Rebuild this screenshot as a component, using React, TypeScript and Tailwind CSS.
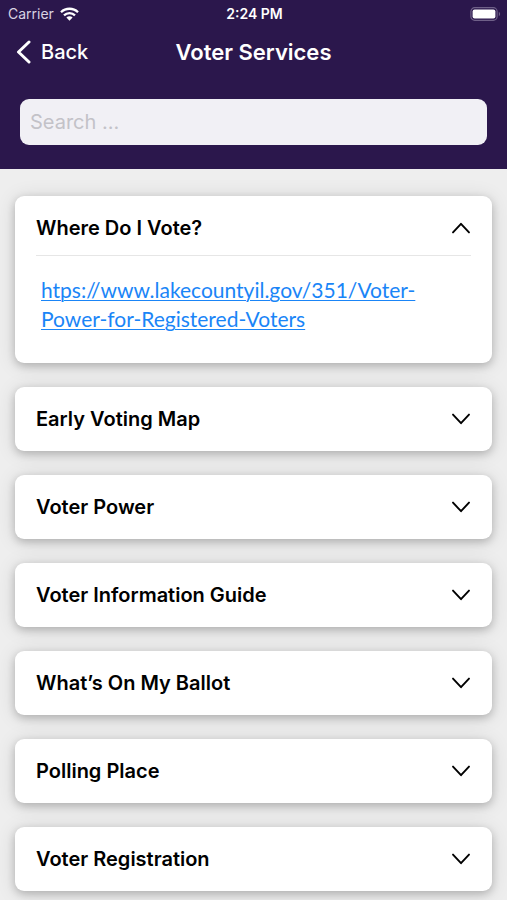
import { useState } from "react";

interface Service {
  title: string;
  link?: string;
}

const services: Service[] = [
  {
    title: "Where Do I Vote?",
    link: "htps://www.lakecountyil.gov/351/Voter-Power-for-Registered-Voters",
  },
  { title: "Early Voting Map" },
  { title: "Voter Power" },
  { title: "Voter Information Guide" },
  { title: "What’s On My Ballot" },
  { title: "Polling Place" },
  { title: "Voter Registration" },
];

function WifiIcon() {
  return (
    <svg viewBox="0 0 19 14" className="h-3.5 w-[19px]" aria-hidden="true">
      <g fill="none" stroke="currentColor" strokeWidth="2.3">
        <path d="M1 5.2a12.2 12.2 0 0 1 17 0" />
        <path d="M4 8.4a7.8 7.8 0 0 1 11 0" />
      </g>
      <path d="M6.4 10.6a4.4 4.4 0 0 1 6.2 0L9.5 13.8Z" fill="currentColor" />
    </svg>
  );
}

function BatteryIcon() {
  return (
    <svg viewBox="0 0 31 14" className="h-3.5 w-[31px]" aria-hidden="true">
      <rect x="0.9" y="0.7" width="26.2" height="12.6" rx="3.8" fill="none" stroke="#6f6088" strokeWidth="1.2" />
      <rect x="2.6" y="2.4" width="22.8" height="9.2" rx="2" fill="#fff" />
      <path d="M28.8 4.8a2.5 2.5 0 0 1 0 4.4Z" fill="#6f6088" />
    </svg>
  );
}

function Chevron({ open }: { open: boolean }) {
  return (
    <svg
      viewBox="0 0 20 12"
      className={open ? "h-3 w-5 shrink-0 rotate-180" : "h-3 w-5 shrink-0"}
      fill="none"
      stroke="currentColor"
      strokeWidth="1.9"
      strokeLinecap="round"
      strokeLinejoin="round"
      aria-hidden="true"
    >
      <path d="m2 1.6 8 8.6 8-8.6" />
    </svg>
  );
}

function ServiceCard({ service, open, onToggle }: { service: Service; open: boolean; onToggle: () => void }) {
  return (
    <section className="rounded-[9px] bg-white px-[21px] shadow-[0_3px_8px_rgba(0,0,0,0.2),0_2px_20px_rgba(0,0,0,0.12)]">
      <h2>
        <button
          type="button"
          aria-expanded={open}
          onClick={onToggle}
          className={
            open && service.link
              ? "flex h-[60px] w-full items-center justify-between border-b border-[#e6e6e6] pt-1 text-left"
              : "flex h-16 w-full items-center justify-between text-left"
          }
        >
          <span className="text-xl font-semibold">{service.title}</span>
          <Chevron open={open} />
        </button>
      </h2>
      {open && service.link && (
        <p className="px-[5px] pt-[19px] pb-[30px] font-['Lato',sans-serif] text-[21px] leading-[29px]">
          <a href={service.link} className="text-[#1a85f7] underline decoration-1 underline-offset-2">
            {service.link}
          </a>
        </p>
      )}
    </section>
  );
}

export default function App() {
  const [openIndex, setOpenIndex] = useState<number | null>(0);

  return (
    <div className="min-h-screen bg-[#eeeeee] font-['Inter',sans-serif] text-black">
      <header className="bg-[#2b174c] pb-6 text-white">
        <div className="grid h-7 grid-cols-3 items-center pr-1.5 pl-2 text-sm">
          <div className="flex items-center gap-1.5 text-[#d9d3e2]">
            <span>Carrier</span>
            <span className="text-white">
              <WifiIcon />
            </span>
          </div>
          <span className="text-center font-semibold">2:24 PM</span>
          <div className="flex justify-end">
            <BatteryIcon />
          </div>
        </div>
        <div className="grid h-12 grid-cols-[1fr_auto_1fr] items-center px-4">
          <button type="button" className="flex items-center gap-2.5 justify-self-start text-xl font-medium">
            <svg
              viewBox="0 0 15 24"
              className="h-6 w-[15px]"
              fill="none"
              stroke="currentColor"
              strokeWidth="3"
              strokeLinecap="round"
              strokeLinejoin="round"
              aria-hidden="true"
            >
              <path d="M13 2 2.5 12 13 22" />
            </svg>
            Back
          </button>
          <h1 className="text-[22px] font-semibold">Voter Services</h1>
        </div>
        <div className="px-5 pt-[23px]">
          <input
            type="search"
            aria-label="Search"
            placeholder="Search ..."
            className="block h-[46px] w-full rounded-[9px] bg-[#f1f0f5] px-2.5 text-xl text-black outline-none placeholder:text-[#c3c2c8]"
          />
        </div>
      </header>
      <main className="flex flex-col gap-6 px-[15px] pt-[27px] pb-2">
        {services.map((service, index) => (
          <ServiceCard
            key={service.title}
            service={service}
            open={openIndex === index}
            onToggle={() => setOpenIndex(openIndex === index ? null : index)}
          />
        ))}
      </main>
    </div>
  );
}
